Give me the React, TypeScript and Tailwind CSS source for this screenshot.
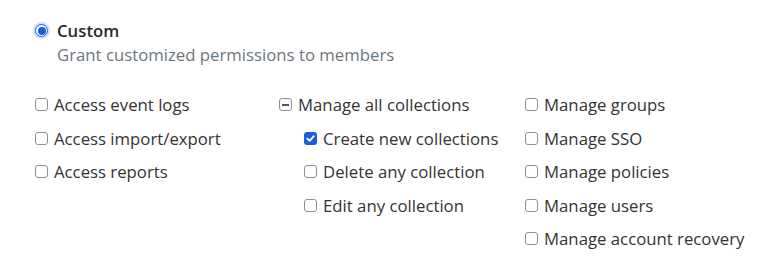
type Box = "off" | "on" | "mixed";

function CheckBox(props: { state: Box }) {
  if (props.state === "on") {
    return (
      <span className="flex h-[13px] w-[13px] shrink-0 items-center justify-center rounded-[3px] bg-[#175ddc]">
        <svg viewBox="0 0 12 12" className="h-[11px] w-[11px]">
          <path d="M2.5 6.2 L5 8.6 L9.6 3.4" fill="none" stroke="white" strokeWidth="2" strokeLinecap="round" strokeLinejoin="round" />
        </svg>
      </span>
    );
  }
  return (
    <span className="flex h-[13px] w-[13px] shrink-0 items-center justify-center rounded-[3px] border border-[#8f8f8f] bg-white">
      {props.state === "mixed" && <span className="h-[2px] w-[7px] bg-[#555]" />}
    </span>
  );
}

function Item(props: { label: string; state?: Box; indent?: boolean }) {
  return (
    <label className={`flex items-center gap-[6px] ${props.indent ? "pl-[25px]" : ""}`}>
      <CheckBox state={props.state ?? "off"} />
      <span>{props.label}</span>
    </label>
  );
}

export default function App() {
  return (
    <div className="min-h-screen bg-white pl-[35px] pt-[19px] text-[16.75px] leading-[23px] text-[#333]" style={{ fontFamily: '"Open Sans", sans-serif' }}>
      <div className="flex items-start gap-[9px]">
        <span className="mt-[5px] flex h-[13px] w-[13px] items-center justify-center rounded-full border-[1.5px] border-[#175ddc] bg-white ring-2 ring-[#cfe0fb]">
          <span className="h-[8px] w-[8px] rounded-full bg-[#175ddc]" />
        </span>
        <div>
          <div className="font-semibold text-[#2b2b2b]">Custom</div>
          <div className="mt-[1px] text-[#6d757e]">Grant customized permissions to members</div>
        </div>
      </div>

      <div className="mt-[27px] flex">
        <div className="flex w-[244px] flex-col gap-[10.5px]">
          <Item label="Access event logs" />
          <Item label="Access import/export" />
          <Item label="Access reports" />
        </div>
        <div className="flex w-[246px] flex-col gap-[10.5px]">
          <Item label="Manage all collections" state="mixed" />
          <Item label="Create new collections" state="on" indent />
          <Item label="Delete any collection" indent />
          <Item label="Edit any collection" indent />
        </div>
        <div className="flex flex-col gap-[10.5px]">
          <Item label="Manage groups" />
          <Item label="Manage SSO" />
          <Item label="Manage policies" />
          <Item label="Manage users" />
          <Item label="Manage account recovery" />
        </div>
      </div>
    </div>
  );
}
